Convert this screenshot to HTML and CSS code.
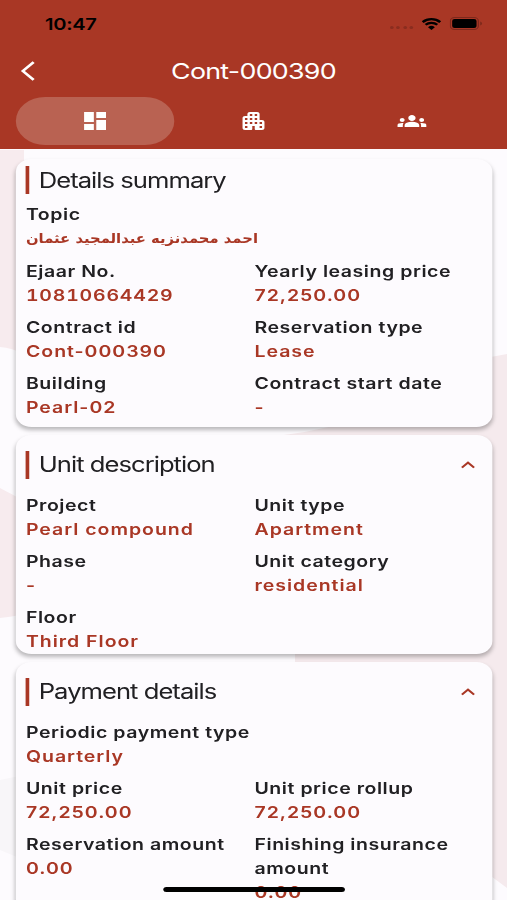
FILE: index.html
```html
<!DOCTYPE html>
<html lang="en">

<head>
	<meta charset="utf-8">
	<title>Cont-000390</title>
	<link rel="stylesheet" href="styles.css">
</head>

<body>

<div class="screen">

	<header class="header">
		<div class="status">
			<span class="time">10:47</span>
			<span class="dots"><i></i><i></i><i></i><i></i></span>
			<svg class="wifi" viewBox="0 0 16 12" width="16" height="12">
				<path d="M.8 4.1a10.4 10.4 0 0 1 14.4 0M3.2 6.8a7 7 0 0 1 9.6 0" fill="none" stroke="#000" stroke-width="2.200"/>
				<path d="M5.2 9.2a4 4 0 0 1 5.6 0L8 12z"/>
			</svg>
			<svg class="battery" viewBox="0 0 27 13" width="27" height="13">
				<rect x=".5" y=".5" width="23" height="12" rx="3.5" fill="none" stroke="#7d291c"/>
				<rect x="2" y="2" width="20" height="9" rx="2"/>
				<path d="M25 4.5v4q1.5-.5 1.5-2t-1.5-2z" fill="#7d291c"/>
			</svg>
		</div>
		<div class="titlebar">
			<svg class="back" viewBox="0 0 12 20" width="12" height="20"><path d="M10.6 1.2L1.8 10l8.8 8.8" fill="none" stroke="#fff" stroke-width="2.4"/></svg>
			<h1>Cont-000390</h1>
		</div>
		<nav class="tabs">
			<a class="tab active">
				<svg viewBox="0 0 24 24" width="24" height="24"><path d="M3 13h8V3H3v10zm0 8h8v-6H3v6zm10 0h8V11h-8v10zm0-18v6h8V3h-8z" fill="#fff"/></svg>
			</a>
			<a class="tab">
				<svg viewBox="0 0 24 24" width="24" height="24"><path d="M17 11V5c0-1.100-.9-2-2-2H9c-1.100 0-2 .9-2 2v2H5c-1.100 0-2 .9-2 2v10c0 1.100.9 2 2 2h5c.55 0 1-.45 1-1v-3h2v3c0 .55.45 1 1 1h5c1.100 0 2-.9 2-2v-6c0-1.100-.9-2-2-2h-2zM7 19H5v-2h2v2zm0-4H5v-2h2v2zm0-4H5V9h2v2zm4 4H9v-2h2v2zm0-4H9V9h2v2zm0-4H9V5h2v2zm4 8h-2v-2h2v2zm0-4h-2V9h2v2zm0-4h-2V5h2v2zm4 12h-2v-2h2v2zm0-4h-2v-2h2v2z" fill="#fff"/></svg>
			</a>
			<a class="tab">
				<svg viewBox="0 0 24 24" width="24" height="24"><path d="M12 12.750c1.630 0 3.070.39 4.240.9 1.080.48 1.760 1.560 1.760 2.730V18H6v-1.610c0-1.180.68-2.260 1.760-2.730 1.170-.52 2.610-.91 4.240-.91zM4 13c1.100 0 2-.9 2-2s-.9-2-2-2-2 .9-2 2 .9 2 2 2zm1.130 1.100C4.760 14.040 4.390 14 4 14c-.99 0-1.930.21-2.780.58C.48 14.900 0 15.620 0 16.430V18h4.500v-1.610c0-.83.23-1.610.63-2.290zM20 13c1.100 0 2-.9 2-2s-.9-2-2-2-2 .9-2 2 .9 2 2 2zm4 3.430c0-.81-.48-1.530-1.220-1.850C21.930 14.210 20.990 14 20 14c-.39 0-.76.04-1.130.1.4.68.63 1.460.63 2.290V18H24v-1.570zM12 6c1.660 0 3 1.340 3 3s-1.340 3-3 3-3-1.340-3-3 1.340-3 3-3z" fill="#fff"/></svg>
			</a>
		</nav>
	</header>

	<svg class="backdrop" viewBox="0 150 507 750" preserveAspectRatio="none">
		<path d="M0 150H24V354Q12 348 0 347zM0 488Q12 494 40 510V610Q20 616 0 618z" fill="#f7ebee"/>
		<path d="M0 780L24 775V860L0 850z" fill="#f8f6f9"/>
		<path d="M277 436Q380 425 480 359L507 354V888L480 868V670H295V640H277z" fill="#f5eaed"/>
	</svg>

	<main class="cards">

		<section class="card">
			<h2 class="compact">Details summary</h2>
			<dl>
				<div class="wide"><dt>Topic</dt><dd class="arabic" lang="ar">احمد محمدنزيه عبدالمجيد عثمان</dd></div>
				<div><dt>Ejaar No.</dt><dd class="num">10810664429</dd></div>
				<div><dt>Yearly leasing price</dt><dd>72,250.00</dd></div>
				<div><dt>Contract id</dt><dd>Cont-000390</dd></div>
				<div><dt>Reservation type</dt><dd>Lease</dd></div>
				<div><dt>Building</dt><dd>Pearl-02</dd></div>
				<div><dt>Contract start date</dt><dd>-</dd></div>
			</dl>
		</section>

		<section class="card flush">
			<h2>Unit description
				<svg class="chevron" viewBox="0 0 12 8" width="12" height="8"><path d="M1 6.700l5-5 5 5" fill="none" stroke="#a93725" stroke-width="1.900"/></svg>
			</h2>
			<dl>
				<div><dt>Project</dt><dd>Pearl compound</dd></div>
				<div><dt>Unit type</dt><dd>Apartment</dd></div>
				<div><dt>Phase</dt><dd>-</dd></div>
				<div><dt>Unit category</dt><dd>residential</dd></div>
				<div><dt>Floor</dt><dd>Third Floor</dd></div>
			</dl>
		</section>

		<section class="card">
			<h2>Payment details
				<svg class="chevron" viewBox="0 0 12 8" width="12" height="8"><path d="M1 6.700l5-5 5 5" fill="none" stroke="#a93725" stroke-width="1.900"/></svg>
			</h2>
			<dl>
				<div class="wide"><dt>Periodic payment type</dt><dd>Quarterly</dd></div>
				<div><dt>Unit price</dt><dd>72,250.00</dd></div>
				<div><dt>Unit price rollup</dt><dd>72,250.00</dd></div>
				<div><dt>Reservation amount</dt><dd>0.00</dd></div>
				<div><dt>Finishing insurance amount</dt><dd>0.00</dd></div>
			</dl>
		</section>

	</main>

	<div class="home"></div>

</div>

</body>

</html>
```
FILE: styles.css
```css
* {
	box-sizing: border-box;
}

body {
	margin: 0;
	overflow: hidden;
	background: #fdfbfe;
	font-family: Inter, "Liberation Sans", sans-serif;
}

/* laid out 416px wide, stretched sideways to fill the window */
.screen {
	position: relative;
	width: 416px;
	height: 900px;
	overflow: hidden;
	transform: scaleX(1.21875);
	transform-origin: 0 0;
	color: #212023;
}

.header {
	height: 149px;
	background: #a93725;
	color: #fff;
}

.status {
	display: flex;
	align-items: center;
	height: 47px;
	padding: 0 20px 0 37px;
	color: #000;
}

.time {
	flex: 1;
	font-size: 16.500px;
	font-weight: 600;
	letter-spacing: -.3px;
}

.dots {
	display: flex;
	gap: 2.500px;
	margin: 8px 7px 0 0;
}

.dots i {
	width: 3px;
	height: 3px;
	border-radius: 50%;
	background: #8a2d1f;
}

.battery {
	margin-left: 7px;
}

.titlebar {
	display: flex;
	align-items: center;
	height: 50px;
	padding: 0 17px 2px;
}

.titlebar h1 {
	flex: 1;
	margin: 0 12px 0 0;
	font-size: 22px;
	font-weight: 400;
	letter-spacing: -.6px;
	text-align: center;
}

.tabs {
	display: flex;
	padding: 0 12.800px;
}

.tab {
	display: flex;
	flex: 1;
	align-items: center;
	justify-content: center;
	height: 48px;
	padding-bottom: 1px;
	border-radius: 24px;
}

.tab.active {
	background: #b96252;
}

.backdrop {
	position: absolute;
	top: 150px;
	left: 0;
	width: 416px;
	height: 750px;
}

.cards {
	position: relative;
	display: flex;
	flex-direction: column;
	gap: 8px;
	padding: 9.500px 12.500px 0 12.800px;
}

.card {
	padding: 0 8px 8px 8.500px;
	border-radius: 13px;
	background: #fdfbfe;
	box-shadow: 0 3px 4px rgba(0, 0, 0, .27);
}

.card.flush {
	padding-bottom: 1px;
}

.card h2 {
	display: flex;
	align-items: center;
	height: 58px;
	margin: 0;
	padding-top: 2px;
	font-size: 21px;
	font-weight: 400;
	letter-spacing: -.8px;
}

.card h2.compact {
	height: 43px;
	padding-top: 0;
}

.card h2::before {
	content: "";
	width: 3px;
	height: 28px;
	margin-right: 7.500px;
	background: #a93725;
}

.chevron {
	margin: 0 6px 0 auto;
}

dl {
	display: grid;
	grid-template-columns: 187.500px 1fr;
	row-gap: 8.100px;
	margin: 0;
}

.wide {
	grid-column: 1 / 3;
}

dt, dd {
	margin: 0;
	font-size: 16px;
	font-weight: 600;
	line-height: 24px;
	letter-spacing: .45px;
}

dd {
	color: #a93725;
	letter-spacing: .8px;
}

.num {
	font-variant-numeric: tabular-nums;
	letter-spacing: .65px;
}

.arabic {
	font-family: "DejaVu Sans Condensed", "DejaVu Sans", sans-serif;
	font-size: 13.500px;
	font-stretch: condensed;
	line-height: 25px;
	letter-spacing: 0;
}

/* iOS home indicator */
.home {
	position: absolute;
	left: 134px;
	bottom: 8px;
	width: 149px;
	height: 5px;
	border-radius: 3px;
	background: #000;
}
```
